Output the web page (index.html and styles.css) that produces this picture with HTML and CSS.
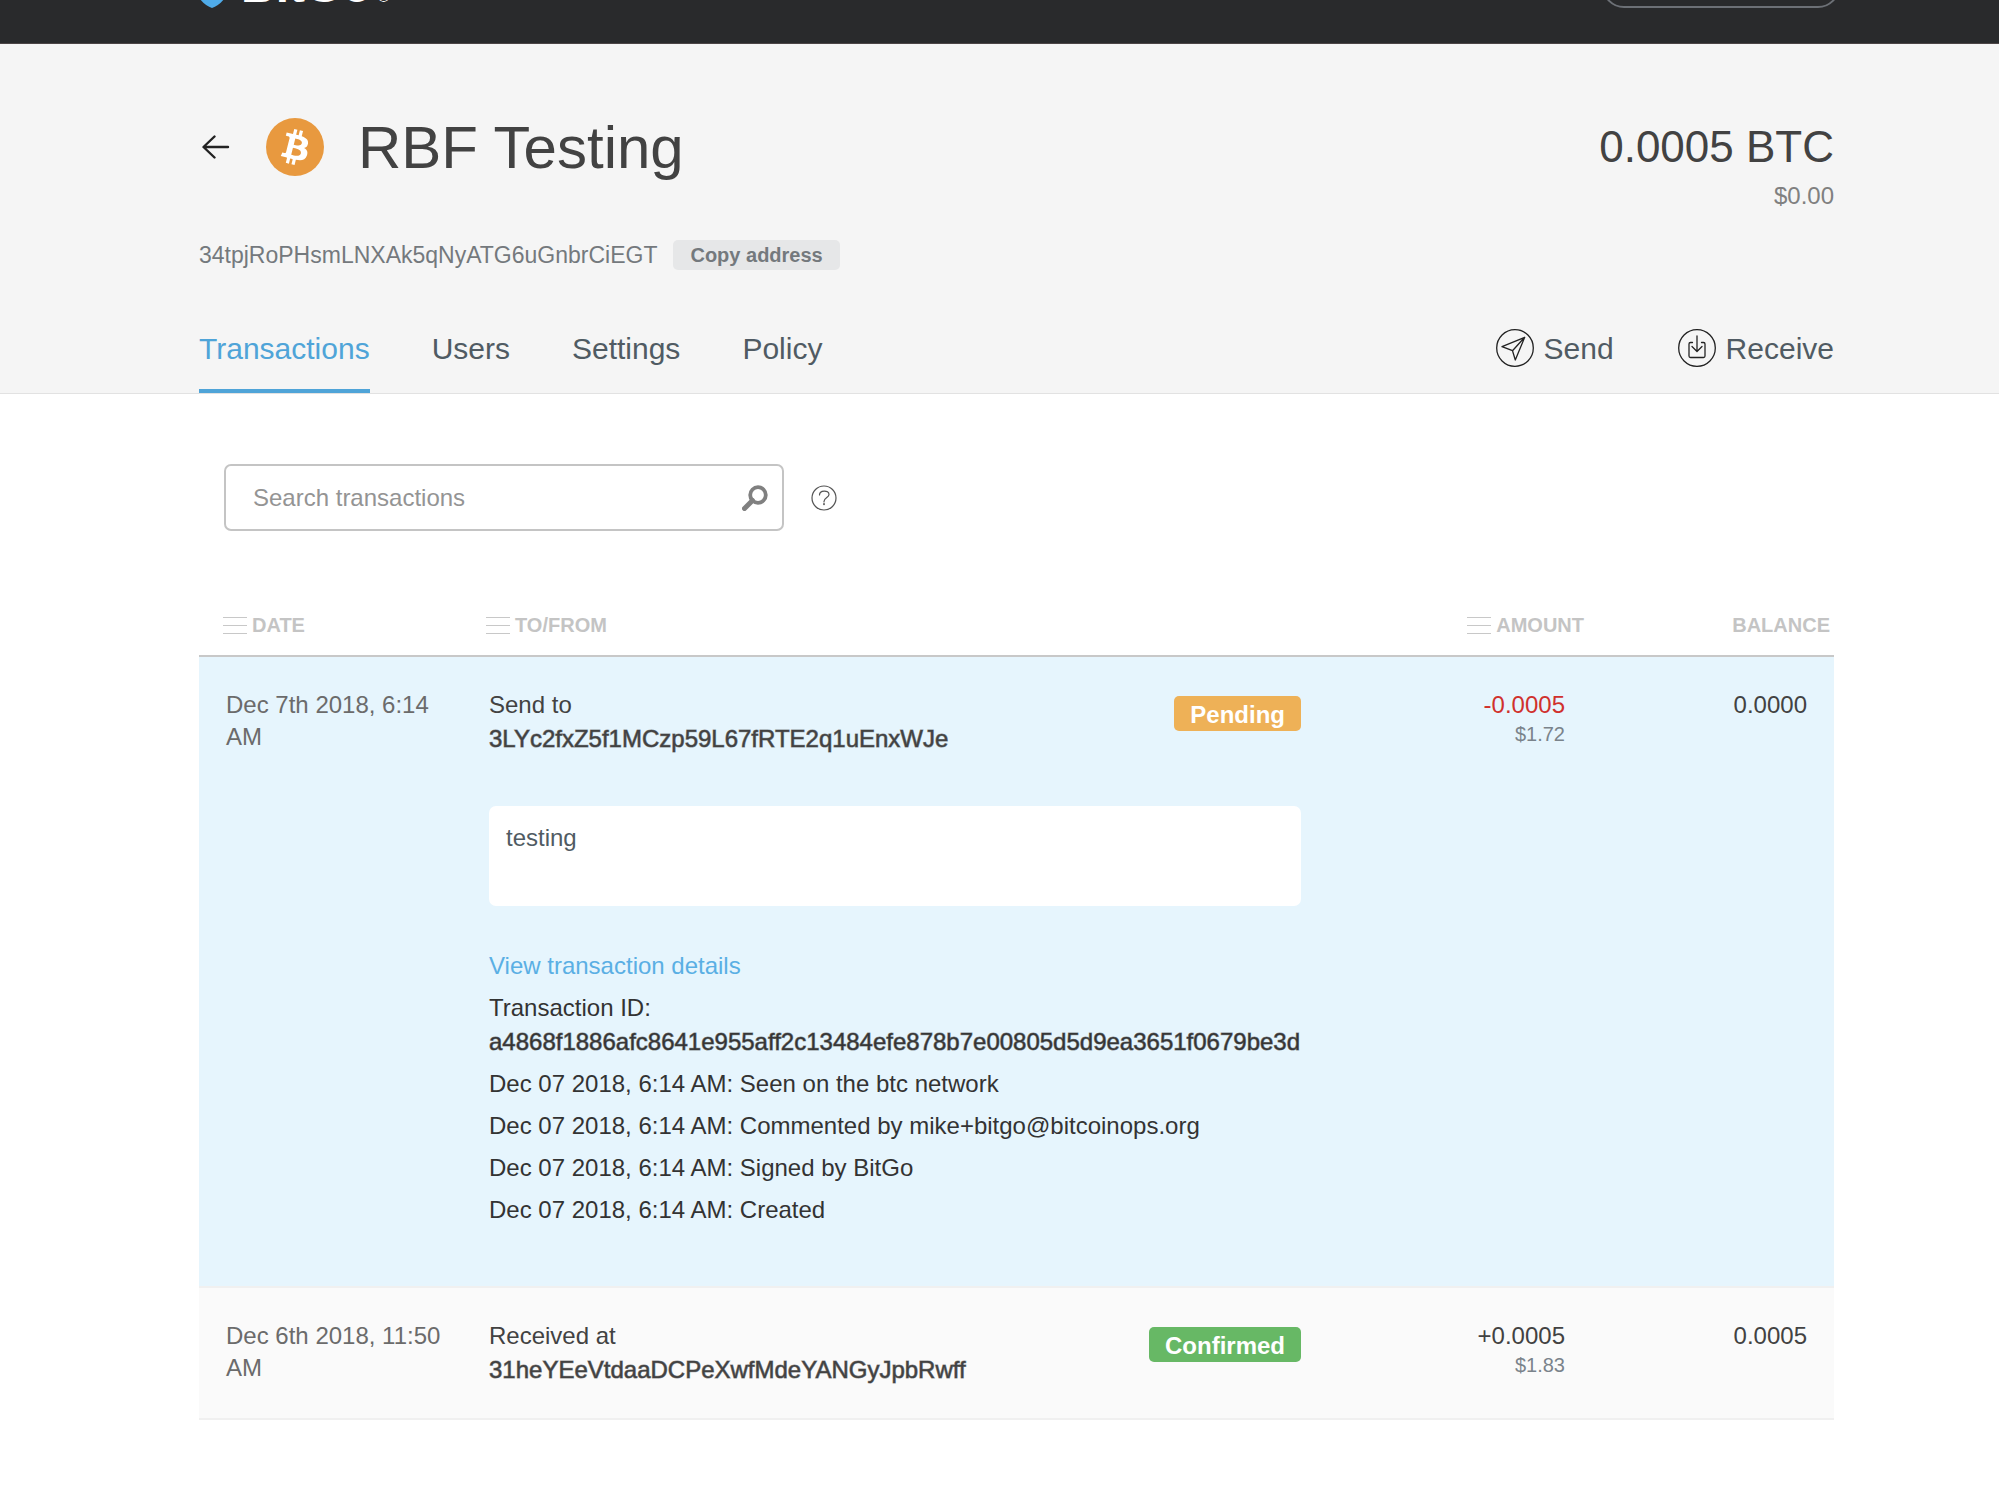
FILE: index.html
```html
<!DOCTYPE html>
<html lang="en">
<head>
<meta charset="utf-8">
<meta name="viewport" content="width=device-width, initial-scale=1">
<title>RBF Testing</title>
<link rel="stylesheet" href="styles.css">
</head>
<body>
<header class="site-header">
  <a class="logo" href="#">
    <svg class="logo-mark" viewBox="0 0 26 44" aria-hidden="true"><path d="M13 0 26 6V33.500C23 38.500 17.500 42.500 13 44 8.500 42.500 3 38.500 0 33.500V6Z" fill="#4fabe9"/></svg>
    <span class="logo-name">BitGo<span class="logo-reg">®</span></span>
  </a>
  <button class="account-button" type="button" aria-label="Account"></button>
</header>

<section class="wallet">
  <div class="wallet-top">
    <div class="wallet-title">
      <a class="back" href="#" aria-label="Back">
        <svg viewBox="0 0 28 24" aria-hidden="true"><path d="M26 12H2M12.500 1.500 1.500 12 12.500 22.500" fill="none" stroke="#222" stroke-width="2.400" stroke-linecap="round" stroke-linejoin="round"/></svg>
      </a>
      <svg class="coin" viewBox="0 0 32 32" aria-hidden="true"><circle cx="16" cy="16" r="16" fill="#e8993f"/><path fill="#fff" d="M23.189 14.02c.314-2.096-1.283-3.223-3.465-3.975l.708-2.84-1.728-.43-.69 2.765c-.454-.114-.92-.22-1.385-.326l.695-2.783L15.596 6l-.708 2.839c-.376-.086-.746-.17-1.104-.26l.002-.009-2.384-.595-.46 1.846s1.283.294 1.256.312c.7.175.826.638.805 1.006l-.806 3.235c.048.012.11.03.18.057l-.183-.045-1.13 4.532c-.086.212-.303.531-.793.41.018.025-1.256-.313-1.256-.313l-.858 1.978 2.25.561c.418.105.828.215 1.231.318l-.715 2.872 1.727.43.708-2.84c.472.127.93.245 1.378.357l-.706 2.828 1.728.43.715-2.866c2.948.558 5.164.333 6.097-2.333.752-2.146-.037-3.385-1.588-4.192 1.13-.26 1.98-1.003 2.207-2.538zm-3.95 5.538c-.533 2.147-4.148.986-5.32.695l.95-3.805c1.172.293 4.929.872 4.37 3.11zm.535-5.569c-.487 1.953-3.495.96-4.47.717l.86-3.45c.975.243 4.118.696 3.61 2.733z"/></svg>
      <h1>RBF Testing</h1>
    </div>
    <div class="wallet-balance">
      <div class="balance-coin">0.0005 BTC</div>
      <div class="balance-fiat">$0.00</div>
    </div>
  </div>
  <div class="wallet-address">
    <span>34tpjRoPHsmLNXAk5qNyATG6uGnbrCiEGT</span>
    <button class="copy-button" type="button">Copy address</button>
  </div>
  <div class="wallet-bar">
    <nav class="tabs">
      <a class="tab tab-active" href="#">Transactions</a>
      <a class="tab" href="#">Users</a>
      <a class="tab" href="#">Settings</a>
      <a class="tab" href="#">Policy</a>
    </nav>
    <div class="actions">
      <a class="action" href="#">
        <svg viewBox="0 0 38 38" fill="none" stroke="#222" stroke-width="1.300" stroke-linejoin="round" aria-hidden="true"><circle cx="19" cy="19" r="18.300"/><path d="M28.700 8.300 6 17.700 16.500 21.700 19.300 31ZM28.700 8.300 16.500 21.700"/></svg>
        Send
      </a>
      <a class="action" href="#">
        <svg viewBox="0 0 38 38" fill="none" stroke="#222" stroke-width="1.300" stroke-linejoin="round" stroke-linecap="round" aria-hidden="true"><circle cx="19" cy="19" r="18.300"/><path d="M14.500 13.500H12.500Q11 13.500 11 15V27Q11 28.500 12.500 28.500H25.500Q27 28.500 27 27V15Q27 13.500 25.500 13.500H23.500M19 7V22M14 17.500 19 22.500 24 17.500"/></svg>
        Receive
      </a>
    </div>
  </div>
</section>

<main class="content">
  <form class="search">
    <div class="search-box">
      <input type="search" placeholder="Search transactions" aria-label="Search transactions">
      <button class="search-button" type="button" aria-label="Search">
        <svg viewBox="0 0 26 26" fill="none" stroke="#808080" aria-hidden="true"><circle cx="16" cy="10" r="7.800" stroke-width="3.800"/><path d="M10.500 15.500 2.500 23.500" stroke-width="5" stroke-linecap="round"/></svg>
      </button>
    </div>
    <button class="help" type="button" aria-label="Help">
      <svg viewBox="0 0 26 26" fill="none" stroke="#555" stroke-width="1.200" stroke-linecap="round" aria-hidden="true"><circle cx="13" cy="13" r="12"/><path d="M8.500 10C8.500 4.800 18 4.800 18 9.500 18 12.500 13 12.500 13 16.500V17"/><path d="M13 19V19.300" stroke-width="1.800"/></svg>
    </button>
  </form>

  <table class="transactions">
    <colgroup><col class="col-date"><col><col class="col-amount"><col class="col-balance"></colgroup>
    <thead>
      <tr>
        <th scope="col"><span class="sort"></span>DATE</th>
        <th scope="col"><span class="sort"></span>TO/FROM</th>
        <th scope="col" class="amount-head"><span class="sort"></span>AMOUNT</th>
        <th scope="col" class="balance-head">BALANCE</th>
      </tr>
    </thead>
    <tbody>
      <tr class="row-open">
        <td class="date">Dec 7th 2018, 6:14 AM</td>
        <td class="party">
          <div class="party-head">
            <div>Send to<br><strong>3LYc2fxZ5f1MCzp59L67fRTE2q1uEnxWJe</strong></div>
            <span class="badge badge-pending">Pending</span>
          </div>
          <textarea class="comment" aria-label="Comment">testing</textarea>
          <div class="details">
            <a href="#">View transaction details</a>
            <p>Transaction ID:<br><strong>a4868f1886afc8641e955aff2c13484efe878b7e00805d5d9ea3651f0679be3d</strong></p>
            <p>Dec 07 2018, 6:14 AM: Seen on the btc network</p>
            <p>Dec 07 2018, 6:14 AM: Commented by mike+bitgo@bitcoinops.org</p>
            <p>Dec 07 2018, 6:14 AM: Signed by BitGo</p>
            <p>Dec 07 2018, 6:14 AM: Created</p>
          </div>
        </td>
        <td class="number"><span class="negative">-0.0005</span><div class="fiat">$1.72</div></td>
        <td class="number">0.0000</td>
      </tr>
      <tr class="row-alt">
        <td class="date">Dec 6th 2018, 11:50 AM</td>
        <td class="party">
          <div class="party-head">
            <div>Received at<br><strong>31heYEeVtdaaDCPeXwfMdeYANGyJpbRwff</strong></div>
            <span class="badge badge-confirmed">Confirmed</span>
          </div>
        </td>
        <td class="number">+0.0005<div class="fiat">$1.83</div></td>
        <td class="number">0.0005</td>
      </tr>
    </tbody>
  </table>
</main>
</body>
</html>
```
FILE: styles.css
```css
* {
  box-sizing: border-box;
}

body {
  margin: 0;
  background: #fff;
  color: #424242;
  font-family: "Liberation Sans", Arial, sans-serif;
  font-size: 24px;
  line-height: 34px;
}

a {
  color: inherit;
  text-decoration: none;
}

button,
input,
textarea {
  margin: 0;
  border: 0;
  font: inherit;
}

button {
  padding: 0;
  background: none;
  cursor: pointer;
}

svg {
  display: block;
}

.site-header,
.wallet,
.content {
  padding-left: 199px;
  padding-right: 165px;
}

/* Header, pulled up above the top of the window */
.site-header {
  display: flex;
  align-items: center;
  justify-content: space-between;
  height: 116px;
  margin-top: -72px;
  border-bottom: 1px solid #4c4546;
  background: #292a2c;
}

.logo {
  display: flex;
  align-items: center;
  gap: 16px;
  color: #fff;
}

.logo-mark {
  width: 26px;
  height: 44px;
}

.logo-name {
  font-size: 48px;
  font-weight: 700;
  line-height: 58px;
}

.logo-reg {
  margin-left: 6px;
  font-size: 16px;
  font-weight: 400;
  line-height: 16px;
}

.account-button {
  width: 238px;
  height: 44px;
  margin-right: -6px;
  border: 2px solid #6c7076;
  border-radius: 22px;
}

/* Wallet summary */
.wallet {
  padding-top: 69px;
  border-bottom: 1px solid #e2e2e2;
  background: #f5f5f5;
}

.wallet-top {
  display: flex;
  justify-content: space-between;
}

.wallet-title {
  display: flex;
  align-items: center;
  height: 68px;
}

.back svg {
  width: 28px;
  height: 24px;
}

.back {
  margin: 0 36px 0 3px;
}

.coin {
  width: 58px;
  height: 58px;
  margin-right: 34px;
}

h1 {
  margin: 0;
  padding-top: 2px;
  font-size: 60px;
  font-weight: 400;
  line-height: 68px;
}

.wallet-balance {
  padding-top: 8px;
  text-align: right;
}

.balance-coin {
  font-size: 44px;
  line-height: 52px;
}

.balance-fiat {
  margin-top: 9px;
  color: #808080;
  line-height: 28px;
}

.wallet-address {
  display: flex;
  align-items: center;
  gap: 16px;
  margin-top: 28px;
  color: #74797d;
  font-size: 23px;
}

.copy-button {
  height: 30px;
  padding: 0 17px;
  border-radius: 5px;
  background: #e6e7e8;
  color: #74797d;
  font-size: 20px;
  font-weight: 700;
  line-height: 30px;
}

.wallet-bar {
  display: flex;
  justify-content: space-between;
  margin-top: 59px;
  color: #505b63;
  font-size: 30px;
  line-height: 36px;
}

.tabs {
  display: flex;
  gap: 62px;
}

.tab {
  padding-bottom: 22px;
  border-bottom: 4px solid transparent;
}

.tab-active {
  border-color: #4fa4d8;
  color: #4fa4d8;
}

.actions {
  display: flex;
  align-items: flex-start;
  gap: 64px;
}

.action {
  display: flex;
  align-items: center;
  gap: 10px;
}

.action svg {
  width: 38px;
  height: 38px;
  margin-top: -2px;
}

/* Search */
.content {
  padding-top: 70px;
  padding-bottom: 74px;
}

.search {
  display: flex;
  align-items: center;
  gap: 27px;
  margin-left: 25px;
}

.search-box {
  display: flex;
  align-items: center;
  width: 560px;
  height: 67px;
  padding: 0 14px 0 27px;
  border: 2px solid #c4c4c4;
  border-radius: 7px;
}

.search-box input {
  flex: 1;
  min-width: 0;
  padding: 0;
  outline: none;
  background: none;
  appearance: none;
}

.search-box input::placeholder {
  color: #949494;
  opacity: 1;
}

.search-button svg,
.help svg {
  width: 26px;
  height: 26px;
}

/* Transactions */
.transactions {
  width: 100%;
  margin-top: 82px;
  border-spacing: 0;
  table-layout: fixed;
}

.col-date {
  width: 263px;
}

.col-amount {
  width: 264px;
}

.col-balance {
  width: 242px;
}

th {
  padding: 0 0 18px 24px;
  border-bottom: 2px solid #c8c8c8;
  color: #c4c4c4;
  font-size: 20px;
  line-height: 24px;
  text-align: left;
}

.amount-head {
  padding-right: 8px;
  text-align: right;
}

.balance-head {
  padding-right: 4px;
  text-align: right;
}

.sort {
  display: inline-block;
  width: 24px;
  height: 17px;
  margin-right: 5px;
  border: solid #c8c8c8;
  border-width: 1px 0;
  background: linear-gradient(#c8c8c8, #c8c8c8) center / 100% 1px no-repeat;
  vertical-align: -2px;
}

td {
  padding: 31px 27px;
  border-bottom: 2px solid #f0f0f0;
  vertical-align: top;
}

.row-open td {
  background: #e6f5fd;
}

.row-alt td {
  background: #fafafa;
}

.date {
  padding-top: 32px;
  padding-right: 16px;
  color: #6b6b6b;
  line-height: 32px;
}

.party-head {
  display: flex;
  align-items: flex-start;
  justify-content: space-between;
}

/* Medium weight: the face itself has only regular and bold */
strong {
  font-weight: 400;
  -webkit-text-stroke: 1px rgba(66, 66, 66, 0.6);
}

.badge {
  height: 35px;
  margin-top: 8px;
  padding: 0 16px;
  border-radius: 5px;
  color: #fff;
  font-weight: 700;
  line-height: 38px;
}

.badge-pending {
  background: #eeb157;
}

.badge-confirmed {
  background: #67b865;
}

.comment {
  display: block;
  width: 100%;
  height: 100px;
  margin-top: 50px;
  padding: 15px 17px;
  border-radius: 7px;
  outline: none;
  background: #fff;
  color: #505b63;
  resize: none;
}

.details {
  padding: 43px 0 28px;
  color: #333;
}

.details a {
  color: #5aafe4;
}

.details p {
  margin: 8px 0 0;
}

.number {
  text-align: right;
}

.negative {
  color: #d0312d;
}

.fiat {
  color: #7a838b;
  font-size: 20px;
  line-height: 24px;
}
```
